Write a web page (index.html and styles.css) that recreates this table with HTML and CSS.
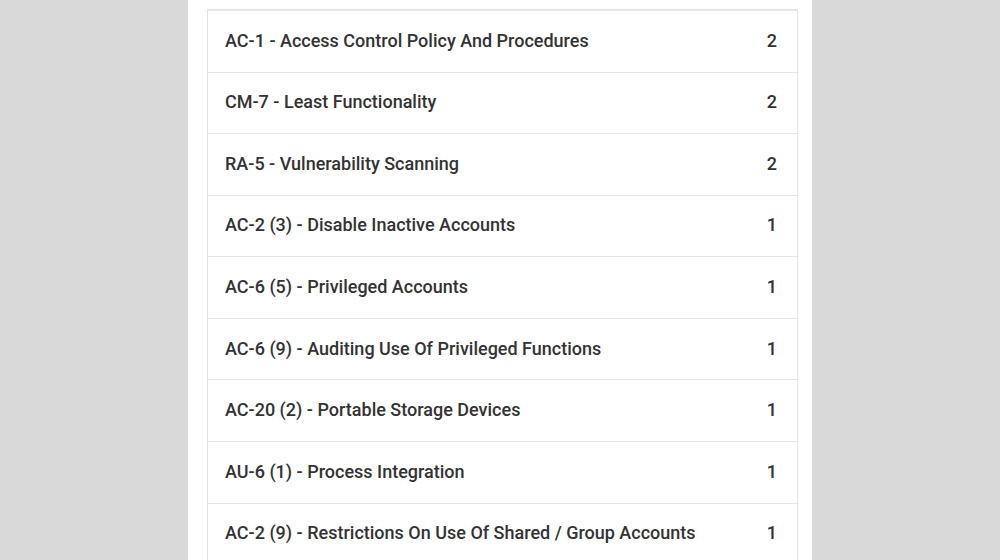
FILE: index.html
```html
<!DOCTYPE html>
<html>
<head>
<meta charset="utf-8">
<link rel="stylesheet" href="styles.css">
</head>
<body>
<div class="panel">
  <ul class="list">
    <li class="row"><span class="name">AC-1 - Access Control Policy And Procedures</span><span class="count">2</span></li>
    <li class="row"><span class="name">CM-7 - Least Functionality</span><span class="count">2</span></li>
    <li class="row"><span class="name">RA-5 - Vulnerability Scanning</span><span class="count">2</span></li>
    <li class="row"><span class="name">AC-2 (3) - Disable Inactive Accounts</span><span class="count">1</span></li>
    <li class="row"><span class="name">AC-6 (5) - Privileged Accounts</span><span class="count">1</span></li>
    <li class="row"><span class="name">AC-6 (9) - Auditing Use Of Privileged Functions</span><span class="count">1</span></li>
    <li class="row"><span class="name">AC-20 (2) - Portable Storage Devices</span><span class="count">1</span></li>
    <li class="row"><span class="name">AU-6 (1) - Process Integration</span><span class="count">1</span></li>
    <li class="row"><span class="name">AC-2 (9) - Restrictions On Use Of Shared / Group Accounts</span><span class="count">1</span></li>
  </ul>
</div>
</body>
</html>
```

FILE: styles.css
```css
html, body {
  margin: 0;
  padding: 0;
  height: 100%;
  background: #d9d9d9;
  overflow: hidden;
}
body {
  display: flex;
  justify-content: center;
  font-family: Roboto, "Liberation Sans", sans-serif;
}
.panel {
  width: 624px;
  background: #ffffff;
  padding: 9px 14px 0 19px;
  box-sizing: border-box;
  height: 100%;
}
.list {
  list-style: none;
  margin: 0;
  padding: 0;
  border-top: 2px solid #e6e6e6;
  border-left: 1px solid #e3e3e3;
  border-right: 1px solid #e3e3e3;
}
.row {
  display: flex;
  justify-content: space-between;
  align-items: center;
  box-sizing: border-box;
  height: 61.57px;
  padding: 0 20px 2px 17px;
  border-bottom: 1px solid #e6e6e6;
  font-size: 18px;
  font-weight: 500;
  color: #333333;
}
```
